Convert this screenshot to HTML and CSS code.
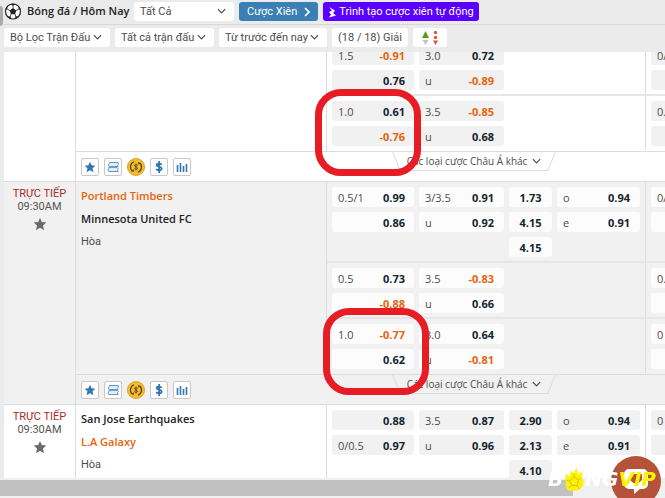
FILE: index.html
```html
<!DOCTYPE html>
<html lang="vi">
<head>
    <meta charset="UTF-8">
    <meta name="viewport" content="width=device-width, initial-scale=1.0">
    <title>Bóng đá / Hôm Nay</title>
    <link rel="stylesheet" href="styles.css">
</head>
<body>
    <svg class="sprite" aria-hidden="true">
        <symbol id="star" viewBox="0 0 16 16"><path d="M8 1l2.1 4.8 5.1.5-3.8 3.5 1.1 5.2L8 12.3 3.5 15l1.1-5.2L.8 6.3l5.1-.5z" fill="currentColor"/></symbol>
        <symbol id="ticket" viewBox="0 0 16 16"><path d="M3.500 2H15v2.500L14 6l1 1.500H3.500L1.500 6l1-1.500zM2.500 8.500H13.500l1.500 1.500-1 1.500 1 2.500H2.500L1 12l1.500-1.500z" fill="#e3eff8" stroke="currentColor"/></symbol>
        <symbol id="coin" viewBox="0 0 18 18"><circle cx="9" cy="9" r="8.500" fill="#f2bd35" stroke="#dca320"/><path d="M7 3.800a5.500 5.500 0 0 0-1.500 9.400M11 14.200a5.500 5.500 0 0 0 1.500-9.400" fill="none" stroke="#5b4312" stroke-width="1.200"/><path d="M4 12.500l3 1.500-.2-2.600zM14 5.500L11 4l.2 2.600z" fill="#5b4312"/><path d="M10.700 7.400C10.200 6.400 7.500 6.400 7.500 7.800c0 1.500 3.100.9 3.100 2.500 0 1.300-2.700 1.300-3.300.3M9 5.700v6.600" fill="none" stroke="#5b4312" stroke-width=".9"/></symbol>
        <symbol id="dollar" viewBox="0 0 16 16"><path d="M11.500 5.200C10.800 3 5 2.800 5 5.500 5 8.300 11.500 7 11.500 10.300c0 3-6.200 2.800-7 .2M8.200 0v16" fill="none" stroke="currentColor" stroke-width="2.400"/></symbol>
        <symbol id="bars" viewBox="0 0 12 12"><path d="M1.500 4v7M4.500 2v9M7.500 5v6M10.500 3v8" stroke="currentColor" stroke-width="1.600"/></symbol>
        <symbol id="down" viewBox="0 0 10 6"><path d="M1 1l4 4 4-4" fill="none" stroke="currentColor" stroke-width="1.300"/></symbol>
    </svg>

    <header class="toolbar">
        <button class="side-tab" aria-label="Menu"></button>
        <div class="title-row">
            <svg class="ball" viewBox="0 0 18 18" aria-hidden="true">
                <circle cx="9" cy="9" r="7.500" fill="#fff" stroke="#222" stroke-width="1.200"/>
                <path d="M9 5.500l3.300 2.400-1.300 3.800H7L5.700 7.900zM6 1.800L9 3.300l3-1.500-3-.8zM1.300 8.500l2-2.300.2-3L1.500 6zM16.700 8.500l-2-2.300-.2-3 2 2.800zM3.300 13.800l3.200.300.8 2.300-2.300-.6zM14.700 13.800l-3.200.3-.8 2.300 2.300-.6z" fill="#222"/>
                <path d="M9 3v3M3 6.500l3 1.500M15 6.500L12 8M7 11.500l-1 3M11 11.500l1 3" stroke="#222" stroke-width=".8"/>
            </svg>
            <h1>Bóng đá / Hôm Nay</h1>
            <div class="select league">
                <select aria-label="Giải đấu"><option>Tất Cả</option></select>
                <svg><use href="#down"/></svg>
            </div>
            <button class="parlay">Cược Xiên <svg viewBox="0 0 6 10"><path d="M1 1l4 4-4 4" fill="none" stroke="currentColor" stroke-width="1.600"/></svg></button>
            <button class="builder"><svg viewBox="0 0 8 12"><path d="M1 1l6 3.500-2 2.500 3 2.500L1 11.500l2-3L1 6l3-1.500z" fill="currentColor"/></svg> Trình tạo cược xiên tự động</button>
        </div>
        <div class="filter-row">
            <div class="select filter-a">
                <select aria-label="Bộ lọc"><option>Bộ Lọc Trận Đấu</option></select>
                <svg><use href="#down"/></svg>
            </div>
            <div class="select filter-b">
                <select aria-label="Trận đấu"><option>Tất cả trận đấu</option></select>
                <svg><use href="#down"/></svg>
            </div>
            <div class="select filter-c">
                <select aria-label="Thời gian"><option>Từ trước đến nay</option></select>
                <svg><use href="#down"/></svg>
            </div>
            <button class="count">(18 / 18) Giải</button>
            <button class="sort" aria-label="Sắp xếp">
                <svg viewBox="0 0 18 16">
                    <path d="M4.500 1L8 8H1z" fill="#5d9a1c"/><path d="M1.500 10h6l-3 5z" fill="#c4c4c4"/>
                    <path d="M12 10.500h5l-2.500 4.500z" fill="#d9583f"/><circle cx="14.500" cy="2.500" r="1.700" fill="#d9583f"/><circle cx="14.500" cy="7.500" r="1.700" fill="#d9583f"/>
                </svg>
            </button>
        </div>
    </header>

    <main class="matches">
        <section class="match match-scrolled">
            <div class="time"></div>
            <div class="teams"></div>
            <div class="odds">
                <div class="group">
                    <div class="col hdp">
                        <button><span>1.5</span><b class="neg">-0.91</b></button>
                        <button><span></span><b>0.76</b></button>
                    </div>
                    <div class="col">
                        <button><span>3.0</span><b>0.72</b></button>
                        <button><span>u</span><b class="neg">-0.89</b></button>
                    </div>
                    <div class="col next"><button><span>0/0.5</span></button><button></button></div>
                </div>
                <div class="group">
                    <div class="col hdp">
                        <button><span>1.0</span><b>0.61</b></button>
                        <button><span></span><b class="neg">-0.76</b></button>
                    </div>
                    <div class="col">
                        <button><span>3.5</span><b class="neg">-0.85</b></button>
                        <button><span>u</span><b>0.68</b></button>
                    </div>
                    <div class="col next"><button><span>0.5</span></button><button></button></div>
                    <div class="mark mark-first"></div>
                </div>
            </div>
            <div class="match-foot">
                <div class="tools">
                    <button aria-label="Yêu thích"><svg><use href="#star"/></svg></button>
                    <button aria-label="Phiếu cược"><svg><use href="#ticket"/></svg></button>
                    <button class="coin" aria-label="Cash out"><svg><use href="#coin"/></svg></button>
                    <button aria-label="Tiền cược"><svg><use href="#dollar"/></svg></button>
                    <button aria-label="Thống kê"><svg><use href="#bars"/></svg></button>
                </div>
                <button class="more">Các loại cược Châu Á khác <svg><use href="#down"/></svg></button>
            </div>
        </section>

        <section class="match match-alt">
            <div class="time">
                <span class="live">TRỰC TIẾP</span>
                <span>09:30AM</span>
                <svg><use href="#star"/></svg>
            </div>
            <div class="teams">
                <strong class="fav">Portland Timbers</strong>
                <strong>Minnesota United FC</strong>
                <span>Hòa</span>
            </div>
            <div class="odds">
                <div class="group">
                    <div class="col hdp">
                        <button><span>0.5/1</span><b>0.99</b></button>
                        <button><span></span><b>0.86</b></button>
                    </div>
                    <div class="col">
                        <button><span>3/3.5</span><b>0.91</b></button>
                        <button><span>u</span><b>0.92</b></button>
                    </div>
                    <div class="col single">
                        <button><b>1.73</b></button>
                        <button><b>4.15</b></button>
                        <button><b>4.15</b></button>
                    </div>
                    <div class="col">
                        <button><span>o</span><b>0.94</b></button>
                        <button><span>e</span><b>0.91</b></button>
                    </div>
                    <div class="col next"><button><span>0/0.5</span></button><button></button></div>
                </div>
                <div class="group">
                    <div class="col hdp">
                        <button><span>0.5</span><b>0.73</b></button>
                        <button><span></span><b class="neg">-0.88</b></button>
                    </div>
                    <div class="col">
                        <button><span>3.5</span><b class="neg">-0.83</b></button>
                        <button><span>u</span><b>0.66</b></button>
                    </div>
                    <div class="col next"><button><span>0.5</span></button><button></button></div>
                </div>
                <div class="group">
                    <div class="col hdp">
                        <button><span>1.0</span><b class="neg">-0.77</b></button>
                        <button><span></span><b>0.62</b></button>
                    </div>
                    <div class="col">
                        <button><span>3.0</span><b>0.64</b></button>
                        <button><span>u</span><b class="neg">-0.81</b></button>
                    </div>
                    <div class="col next"><button><span>0</span></button><button></button></div>
                    <div class="mark mark-second"></div>
                </div>
            </div>
            <div class="match-foot">
                <div class="tools">
                    <button aria-label="Yêu thích"><svg><use href="#star"/></svg></button>
                    <button aria-label="Phiếu cược"><svg><use href="#ticket"/></svg></button>
                    <button class="coin" aria-label="Cash out"><svg><use href="#coin"/></svg></button>
                    <button aria-label="Tiền cược"><svg><use href="#dollar"/></svg></button>
                    <button aria-label="Thống kê"><svg><use href="#bars"/></svg></button>
                </div>
                <button class="more">Các loại cược Châu Á khác <svg><use href="#down"/></svg></button>
            </div>
        </section>

        <section class="match">
            <div class="time">
                <span class="live">TRỰC TIẾP</span>
                <span>09:30AM</span>
                <svg><use href="#star"/></svg>
            </div>
            <div class="teams">
                <strong>San Jose Earthquakes</strong>
                <strong class="fav">L.A Galaxy</strong>
                <span>Hòa</span>
            </div>
            <div class="odds">
                <div class="group">
                    <div class="col hdp">
                        <button><span></span><b>0.88</b></button>
                        <button><span>0/0.5</span><b>0.97</b></button>
                    </div>
                    <div class="col">
                        <button><span>3.5</span><b>0.87</b></button>
                        <button><span>u</span><b>0.96</b></button>
                    </div>
                    <div class="col single">
                        <button><b>2.90</b></button>
                        <button><b>2.13</b></button>
                        <button><b>4.10</b></button>
                    </div>
                    <div class="col">
                        <button><span>o</span><b>0.94</b></button>
                        <button><span>e</span><b>0.91</b></button>
                    </div>
                    <div class="col next"><button><span>0</span></button><button></button></div>
                </div>
            </div>
        </section>
    </main>

    <div class="scrollbar"><div class="thumb"></div></div>

    <button class="chat" aria-label="Trò chuyện">
        <svg viewBox="0 0 32 32"><path d="M9 5h14a5 5 0 0 1 5 5v10a5 5 0 0 1-5 5h-3l-6 5v-5H9a5 5 0 0 1-5-5V10a5 5 0 0 1 5-5z" fill="#fff"/><path d="M10 10h12v6q-6 7-12 0z" fill="#b4533a"/></svg>
    </button>
    <div class="brand">
        <span>B</span>
        <svg viewBox="0 0 18 24" aria-label="O"><path d="M3 22C0 17 2 12 1 7l4 3 1-6 3 3 2-6 2 7 4-4-1 7 2 2c0 6-3 10-8 10-3 0-5 0-7-1z" fill="#fff200"/><path d="M9 10l4 3-1 5H7l-2-4zM9 7v3M13 13l3-2M12 18l2 3M7 18l-3 2M5 14l-3-1" fill="none" stroke="#c9bf00" stroke-width=".8"/></svg>
        <span>NG</span><span class="vip">VIP</span>
    </div>
</body>
</html>
```

FILE: styles.css
```css
* {
    box-sizing: border-box;
}

body {
    display: flex;
    flex-direction: column;
    height: 100vh;
    margin: 0;
    overflow: hidden;
    background: #ebebeb;
    color: #4c4c4c;
    font-family: Roboto, "Noto Sans", sans-serif;
    font-size: 11px;
}

button, select {
    margin: 0;
    padding: 0;
    border: none;
    background: none;
    color: inherit;
    font: inherit;
    cursor: pointer;
}

.sprite {
    display: none;
}

/* toolbar */
.toolbar {
    position: relative;
    padding-left: 4px;
}

.side-tab {
    position: absolute;
    left: 0;
    top: 6px;
    width: 3px;
    height: 20px;
    border-radius: 0 3px 3px 0;
    background: #aaa;
}

.title-row, .filter-row {
    display: flex;
    gap: 5px;
}

.title-row {
    height: 25px;
    padding-top: 2px;
    border-bottom: 1px solid #d8d8d8;
}

.filter-row {
    height: 27px;
    padding-top: 3px;
}

.title-row > *, .filter-row > * {
    flex-shrink: 0;
    height: 19px;
    border-radius: 3px;
    white-space: nowrap;
}

.ball {
    width: 18px;
}

h1 {
    width: 102px;
    margin: 0;
    color: #222;
    font-family: "Open Sans", "Noto Sans", sans-serif;
    font-size: 11px;
    font-weight: 600;
    line-height: 18px;
}

.select {
    position: relative;
    background: #fff;
}

.select select {
    width: 100%;
    height: 100%;
    padding: 0 6px;
    appearance: none;
}

.select svg {
    position: absolute;
    right: 8px;
    top: 6px;
    width: 9px;
    height: 6px;
    pointer-events: none;
}

.league {
    width: 100px;
}

.parlay {
    display: flex;
    align-items: center;
    justify-content: space-between;
    width: 79px;
    padding: 0 8px;
    background: #3a80b5;
    color: #fff;
}

.parlay svg {
    width: 6px;
    height: 10px;
}

.builder {
    display: flex;
    gap: 3px;
    align-items: center;
    justify-content: center;
    width: 156px;
    background: #5a00ff;
    color: #fff;
}

.builder svg {
    flex-shrink: 0;
    width: 8px;
    height: 12px;
}

.filter-a {
    width: 106px;
}

.filter-b {
    width: 99px;
}

.filter-c {
    width: 108px;
}

.count {
    width: 76px;
    background: #fff;
}

.sort {
    width: 34px;
    background: #fff;
}

.sort svg {
    display: block;
    width: 18px;
    height: 16px;
    margin: 0 auto;
}

/* matches */
.matches {
    flex: 1;
    min-height: 0;
    margin-left: 4px;
    overflow: hidden;
    background: #fff;
}

.match {
    display: grid;
    grid-template-columns: 72px 1fr 339px;
    border-top: 1px solid #dcdcdc;
    background: #fff;
}

.match-alt {
    background: #f1f1f1;
}

.match-scrolled {
    margin-top: -13px;
}

.time {
    display: flex;
    flex-direction: column;
    grid-row: 1 / 3;
    align-items: center;
    padding-top: 5px;
    border-right: 1px solid #dcdcdc;
    line-height: 13px;
    color: #555;
}

.time .live {
    color: #a92b2b;
}

.time svg {
    width: 14px;
    height: 14px;
    margin-top: 4px;
    color: #6b6b6b;
}

.teams {
    display: flex;
    flex-direction: column;
    padding: 2px 5px;
    line-height: 23px;
}

.teams strong {
    color: #222;
    font-family: "Open Sans", "Noto Sans", sans-serif;
    font-weight: 600;
}

.teams .fav, .neg {
    color: #e8640c;
}

.odds {
    border-left: 1px solid #dcdcdc;
    font-family: "Open Sans", "Noto Sans", sans-serif;
}

.group {
    position: relative;
    display: grid;
    grid-template-columns: 82px 85px 43px 83px 1fr;
    gap: 5px;
    padding: 5px 0 4px 5px;
    border-bottom: 2px solid #e6e6e6;
}

.group:last-child {
    padding-bottom: 5px;
    border-bottom: none;
}

.col {
    display: flex;
    flex-direction: column;
    gap: 5px;
}

.col button {
    display: flex;
    align-items: center;
    justify-content: space-between;
    height: 20px;
    padding: 0 10px 0 6px;
    border-radius: 3px;
    background: #f1f1f1;
}

.match-alt .col button {
    background: #fcfcfc;
}

.col b {
    color: #14242e;
    font-weight: 700;
}

.col b.neg {
    color: #e8640c;
}

.hdp button {
    padding-right: 9px;
}

.single button {
    justify-content: center;
    padding: 0;
}

.next {
    grid-column: 5;
    margin: -5px 0 -4px;
    padding: 5px 0 4px 5px;
    border-left: 1px solid #dcdcdc;
    overflow: hidden;
}

.next button {
    width: 82px;
}

.mark {
    position: absolute;
    z-index: 1;
    width: 106px;
    height: 87px;
    border: 7px solid #e81c24;
    border-radius: 26px;
}

.mark-first {
    left: -12px;
    top: -7px;
}

.mark-second {
    left: -4px;
    top: -11px;
}

.match-foot {
    display: flex;
    grid-column: 2 / 4;
    justify-content: space-between;
    height: 30px;
    padding: 0 109px 0 5px;
    border-top: 1px solid #dcdcdc;
}

.tools {
    display: flex;
    gap: 5px;
    align-items: center;
}

.tools button {
    display: flex;
    align-items: center;
    justify-content: center;
    width: 18px;
    height: 18px;
    border: 1px solid #c8c8c8;
    border-radius: 2px;
    background: #fff;
    color: #2f78b3;
}

.tools svg {
    width: 12px;
    height: 12px;
}

.tools .coin {
    border: none;
    background: none;
}

.tools .coin svg {
    width: 18px;
    height: 18px;
}

.more {
    position: relative;
    display: flex;
    gap: 5px;
    align-items: center;
    justify-content: center;
    width: 164px;
    height: 18px;
    font-family: "Open Sans", "Noto Sans", sans-serif;
    font-size: 10px;
    white-space: nowrap;
}

.more::before, .more::after {
    content: "";
    position: absolute;
    top: 0;
    width: 76px;
    height: 18px;
    border-bottom: 1px solid #dcdcdc;
}

.more::before {
    left: 4px;
    border-left: 1px solid #dcdcdc;
    transform: skewX(22deg);
}

.more::after {
    right: 4px;
    border-right: 1px solid #dcdcdc;
    transform: skewX(-22deg);
}

.more svg {
    width: 9px;
    height: 6px;
}

/* page bottom */
.scrollbar {
    height: 20px;
    padding: 2px 92px 2px 0;
    background: #f0f0f0;
}

.thumb {
    height: 16px;
    background: #c1c1c1;
}

.chat {
    position: fixed;
    right: 4px;
    bottom: -8px;
    width: 50px;
    height: 50px;
    border-radius: 50%;
    background: #b4533a;
}

.chat svg {
    width: 32px;
    height: 32px;
}

.brand {
    position: fixed;
    right: 9px;
    bottom: 6px;
    display: flex;
    align-items: center;
    color: #fff;
    font: italic bold 20px/24px "DejaVu Sans", sans-serif;
}

.brand svg {
    width: 20px;
    height: 26px;
    margin: 0 1px;
}

.brand .vip {
    color: #fff200;
}
```
